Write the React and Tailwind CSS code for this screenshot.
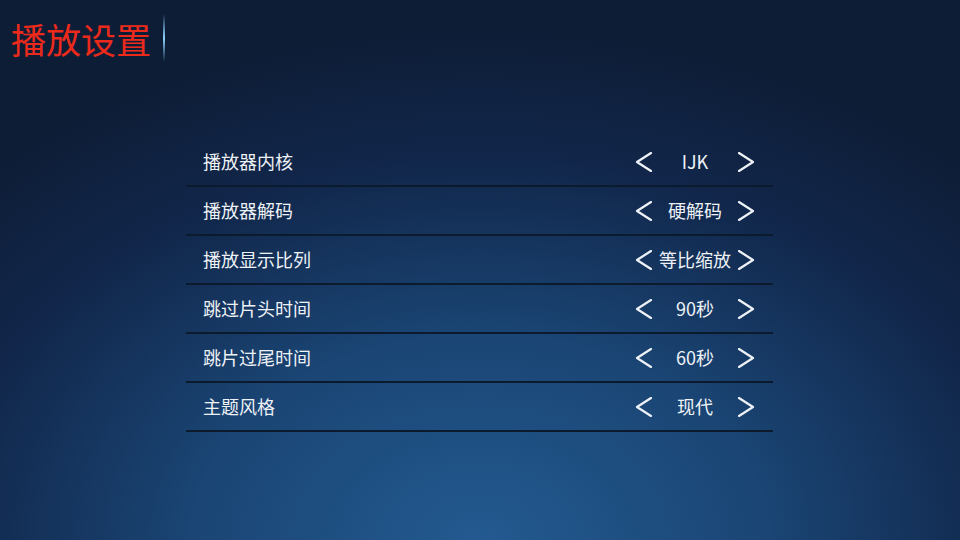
// PlaySettings — player settings screen with left/right option pickers.

import { useState } from "react";

const ROWS = [
  { label: "播放器内核", options: ["IJK", "EXO", "系统"] },
  { label: "播放器解码", options: ["硬解码", "软解码"] },
  { label: "播放显示比列", options: ["等比缩放", "拉伸", "填充"] },
  { label: "跳过片头时间", options: ["90秒", "0秒", "30秒", "60秒"] },
  { label: "跳片过尾时间", options: ["60秒", "0秒", "30秒", "90秒"] },
  { label: "主题风格", options: ["现代", "经典"] },
];

function Chevron({ dir }) {
  const d = dir === "left" ? "M16 1 L2 10 L16 19" : "M2 1 L16 10 L2 19";
  return (
    <svg width="18" height="20" viewBox="0 0 18 20" className="shrink-0">
      <path d={d} fill="none" stroke="#eef2f7" strokeWidth="2.2" strokeLinecap="round" strokeLinejoin="round" />
    </svg>
  );
}

function SettingRow({ row }) {
  const [idx, setIdx] = useState(0);
  const n = row.options.length;

  return (
    <div className="flex items-center h-[49px] pl-[17px] pr-[18px] border-b-2 border-[#0c1a2e]">
      <span className="flex-1 text-[18px] text-[#eef2f7]">{row.label}</span>
      <button className="flex items-center" onClick={() => setIdx(i => (i + n - 1) % n)}>
        <Chevron dir="left" />
      </button>
      <span className="w-[84px] text-center text-[18px] text-[#eef2f7] whitespace-nowrap">{row.options[idx]}</span>
      <button className="flex items-center" onClick={() => setIdx(i => (i + 1) % n)}>
        <Chevron dir="right" />
      </button>
    </div>
  );
}

export default function App() {
  return (
    <div
      className="w-[960px] h-[540px] overflow-hidden flex flex-col bg-[radial-gradient(ellipse_75%_95%_at_50%_100%,#235a90_0%,#1a4574_40%,#11264a_75%,#0e1d36_100%)]"
      style={{ fontFamily: '"Noto Sans CJK SC", "Noto Sans", sans-serif' }}
    >
      <div className="flex items-center h-[76px] pl-[11px]">
        <h1 className="text-[35px] leading-none text-[#ec2a1c]">播放设置</h1>
        <div className="ml-[12px] w-[2px] h-[48px] rounded-full bg-[linear-gradient(to_bottom,transparent,#8fd0ff_50%,transparent)]" />
      </div>

      <div className="mt-[62px] ml-[186px] w-[587px]">
        {ROWS.map(r => (
          <SettingRow key={r.label} row={r} />
        ))}
      </div>
    </div>
  );
}
